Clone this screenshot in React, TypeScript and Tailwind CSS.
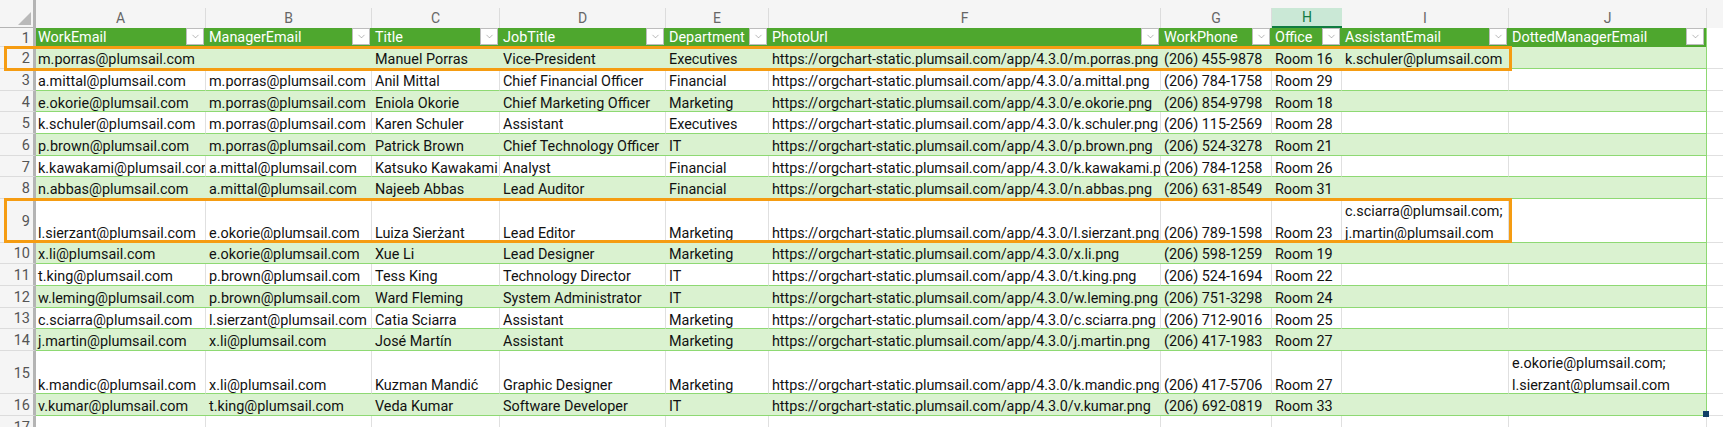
import { ChevronDown } from "lucide-react";

const GRID = "grid grid-cols-[36px_170px_166px_128px_166px_103px_392px_111px_70px_167px_198px_16px]";

const letters = ["A", "B", "C", "D", "E", "F", "G", "H", "I", "J"];
const headers = ["WorkEmail", "ManagerEmail", "Title", "JobTitle", "Department", "PhotoUrl", "WorkPhone", "Office", "AssistantEmail", "DottedManagerEmail"];

const BASE = "https://orgchart-static.plumsail.com/app/4.3.0/";

type Row = { n: number; tall?: boolean; cells: string[][] };

function person(email: string, manager: string, name: string, job: string, dept: string, photo: string, phone: string, room: string, assistant: string[] = [], dotted: string[] = []): string[][] {
  return [[email], manager ? [manager] : [], [name], [job], [dept], [BASE + photo], [phone], [room], assistant, dotted];
}

const rows: Row[] = [
  { n: 2, cells: person("m.porras@plumsail.com", "", "Manuel Porras", "Vice-President", "Executives", "m.porras.png", "(206) 455-9878", "Room 16", ["k.schuler@plumsail.com"]) },
  { n: 3, cells: person("a.mittal@plumsail.com", "m.porras@plumsail.com", "Anil Mittal", "Chief Financial Officer", "Financial", "a.mittal.png", "(206) 784-1758", "Room 29") },
  { n: 4, cells: person("e.okorie@plumsail.com", "m.porras@plumsail.com", "Eniola Okorie", "Chief Marketing Officer", "Marketing", "e.okorie.png", "(206) 854-9798", "Room 18") },
  { n: 5, cells: person("k.schuler@plumsail.com", "m.porras@plumsail.com", "Karen Schuler", "Assistant", "Executives", "k.schuler.png", "(206) 115-2569", "Room 28") },
  { n: 6, cells: person("p.brown@plumsail.com", "m.porras@plumsail.com", "Patrick Brown", "Chief Technology Officer", "IT", "p.brown.png", "(206) 524-3278", "Room 21") },
  { n: 7, cells: person("k.kawakami@plumsail.com", "a.mittal@plumsail.com", "Katsuko Kawakami", "Analyst", "Financial", "k.kawakami.png", "(206) 784-1258", "Room 26") },
  { n: 8, cells: person("n.abbas@plumsail.com", "a.mittal@plumsail.com", "Najeeb Abbas", "Lead Auditor", "Financial", "n.abbas.png", "(206) 631-8549", "Room 31") },
  { n: 9, tall: true, cells: person("l.sierzant@plumsail.com", "e.okorie@plumsail.com", "Luiza Sierżant", "Lead Editor", "Marketing", "l.sierzant.png", "(206) 789-1598", "Room 23", ["c.sciarra@plumsail.com;", "j.martin@plumsail.com"]) },
  { n: 10, cells: person("x.li@plumsail.com", "e.okorie@plumsail.com", "Xue Li", "Lead Designer", "Marketing", "x.li.png", "(206) 598-1259", "Room 19") },
  { n: 11, cells: person("t.king@plumsail.com", "p.brown@plumsail.com", "Tess King", "Technology Director", "IT", "t.king.png", "(206) 524-1694", "Room 22") },
  { n: 12, cells: person("w.leming@plumsail.com", "p.brown@plumsail.com", "Ward Fleming", "System Administrator", "IT", "w.leming.png", "(206) 751-3298", "Room 24") },
  { n: 13, cells: person("c.sciarra@plumsail.com", "l.sierzant@plumsail.com", "Catia Sciarra", "Assistant", "Marketing", "c.sciarra.png", "(206) 712-9016", "Room 25") },
  { n: 14, cells: person("j.martin@plumsail.com", "x.li@plumsail.com", "José Martín", "Assistant", "Marketing", "j.martin.png", "(206) 417-1983", "Room 27") },
  { n: 15, tall: true, cells: person("k.mandic@plumsail.com", "x.li@plumsail.com", "Kuzman Mandić", "Graphic Designer", "Marketing", "k.mandic.png", "(206) 417-5706", "Room 27", [], ["e.okorie@plumsail.com;", "l.sierzant@plumsail.com"]) },
  { n: 16, cells: person("v.kumar@plumsail.com", "t.king@plumsail.com", "Veda Kumar", "Software Developer", "IT", "v.kumar.png", "(206) 692-0819", "Room 33") },
];

function RowHead({ n }: { n: number }) {
  return (
    <div className="flex items-center justify-end border-r-[3px] border-r-[#b4b4b4] border-b border-b-[#dcdcdc] bg-[#f5f5f5] pr-[3px] pt-[2px] text-[14.5px] leading-[15px] text-[#555]">
      {n}
    </div>
  );
}

function cellClass(band: boolean, last: boolean) {
  if (last) return `border-r border-r-[#8ed973] ${band ? "bg-[#daf2d0]" : "bg-white"}`;
  return band ? "bg-[#daf2d0]" : "border-r border-r-[#e0e0e0] bg-white";
}

function DataRow({ row }: { row: Row }) {
  const band = row.n % 2 === 0;
  return (
    <div className={`${GRID} ${row.tall ? "h-[43.4px]" : "h-[21.7px]"}`}>
      <RowHead n={row.n} />
      {row.cells.map((lines, i) => (
        <div
          key={i}
          className={`flex flex-col justify-end overflow-hidden whitespace-nowrap border-b border-b-[#8ed973] leading-[21.7px] ${i === 0 ? "pl-[2px]" : "pl-[3px]"} ${i === 5 ? "tracking-[-0.06px]" : ""} ${cellClass(band, i === 9)}`}
        >
          <div className="-mb-[3px]">
            {lines.map((line) => (
              <div key={line}>{line}</div>
            ))}
          </div>
        </div>
      ))}
      <div className="border-b border-b-[#e0e0e0] bg-white" />
    </div>
  );
}

export default function App() {
  return (
    <div className="relative h-[427px] w-[1723px] overflow-hidden bg-white font-['Roboto',sans-serif] text-[14.4px] text-[#111]">
      {/* top strip */}
      <div className="h-[8px] bg-[#f5f5f5]">
        <div className="h-full w-[36px] border-r-[3px] border-r-[#b4b4b4]" />
      </div>

      {/* column letters */}
      <div className={`${GRID} h-[20px] bg-[#f5f5f5]`}>
        <div className="relative border-r-[3px] border-r-[#b4b4b4] border-b border-b-[#b4b4b4]">
          <div className="absolute bottom-[2px] right-[2px] h-0 w-0 border-b-[13px] border-l-[13px] border-b-[#b9b9b9] border-l-transparent" />
        </div>
        {letters.map((l) => (
          <div
            key={l}
            className={`flex items-center justify-center text-[14px] leading-[15px] ${l === "H" ? "border-b-2 border-b-[#107c41] bg-[#cae8d6] text-[#107c41]" : "border-r border-r-[#dcdcdc] text-[#666]"}`}
          >
            {l}
          </div>
        ))}
        <div />
      </div>

      {/* table header */}
      <div className={`${GRID} h-[19.3px]`}>
        <RowHead n={1} />
        {headers.map((h, i) => (
          <div key={h} className={`relative flex items-center bg-[#4ea72e] leading-[17px] text-white ${i === 0 ? "pl-[2px]" : "pl-[3px]"} ${i === 9 ? "border-r border-r-[#8ed973]" : ""}`}>
            {h}
            <div className="absolute right-[2px] top-0 flex h-[17px] w-[18px] items-center justify-center border border-[#bdbdbd] bg-white">
              <ChevronDown size={11} strokeWidth={1} color="#666" />
            </div>
          </div>
        ))}
        <div className="bg-white" />
      </div>

      {rows.map((row) => (
        <DataRow key={row.n} row={row} />
      ))}

      {/* empty row 17 */}
      <div className={`${GRID} h-[21.7px]`}>
        <RowHead n={17} />
        {letters.map((l) => (
          <div key={l} className="border-r border-r-[#e0e0e0] bg-white" />
        ))}
        <div />
      </div>

      {/* highlight boxes */}
      <div className="absolute left-[4px] top-[46px] h-[25px] w-[1508px] border-[3px] border-[#f59c12]" />
      <div className="absolute left-[4px] top-[198px] h-[45px] w-[1508px] border-[3px] border-[#f59c12]" />

      {/* fill handle */}
      <div className="absolute left-[1703px] top-[411px] h-[6px] w-[6px] bg-[#103f66]" />
    </div>
  );
}
